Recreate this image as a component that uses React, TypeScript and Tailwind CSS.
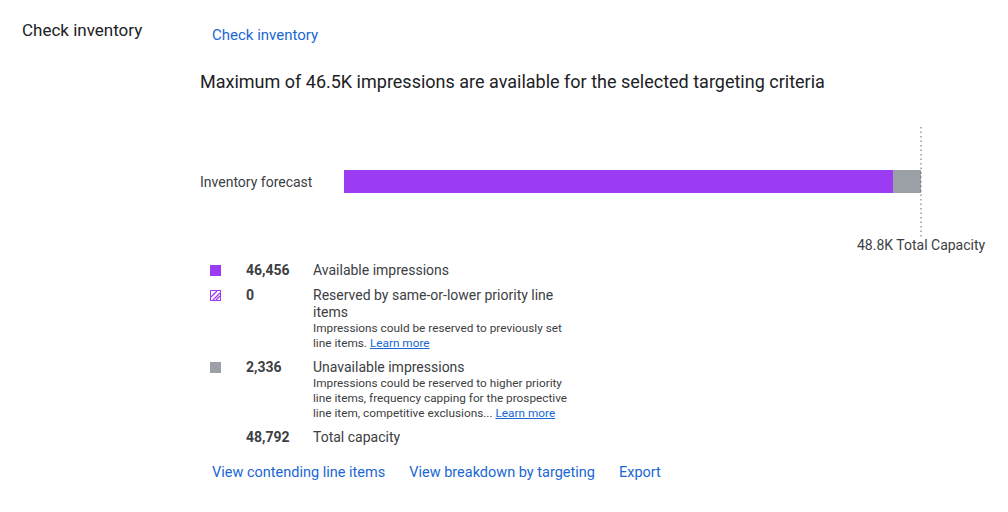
const purple = "#9b3cf3";
const gray = "#9aa0a6";

const HatchIcon = () => (
  <svg width="11" height="11" viewBox="0 0 11 11" className="block">
    <rect x="0.5" y="0.5" width="10" height="10" fill="white" stroke={purple} strokeWidth="1" />
    <path d="M1 7 L7 1 M3 10 L10 3 M6 10 L10 6" stroke={purple} strokeWidth="1.3" />
  </svg>
);

interface LegendRowProps {
  icon?: React.ReactNode;
  value: string;
  label: string;
  note?: React.ReactNode;
}

const LegendRow = ({ icon, value, label, note }: LegendRowProps) => {
  return (
    <div className="flex">
      <div className="w-[36px] pt-[3px]">{icon}</div>
      <div className="w-[67px] font-bold text-[14px] leading-[17px] text-[#3c4043]">{value}</div>
      <div className="w-[266px]">
        <div className="text-[14px] leading-[17px] text-[#3c4043]">{label}</div>
        {note && <div className="w-[263px] text-[11.8px] leading-[15px] text-[#3c4043]">{note}</div>}
      </div>
    </div>
  );
};

const LearnMore = () => (
  <a href="#" className="inline-block leading-[14px] text-[#1a67d2] underline">
    Learn more
  </a>
);

export default function App() {
  return (
    <div className="flex bg-white h-[512px] w-[1008px]" style={{ fontFamily: "Roboto, 'Liberation Sans', sans-serif" }}>
      <div className="w-[200px] pl-[22px] pt-[18px]">
        <h3 className="text-[17px] leading-6 text-[#202124]">Check inventory</h3>
      </div>

      <div className="flex-1 pt-[17px]">
        <button className="h-9 px-3 text-[15px] leading-9 text-[#1a67d2]">Check inventory</button>

        <h2 className="mt-[17px] text-[18px] leading-6 text-[#202124]">
          Maximum of 46.5K impressions are available for the selected targeting criteria
        </h2>

        <div className="relative mt-[33px] pt-[43px]">
          <div className="flex items-center h-[23px]">
            <div className="w-[144px] pt-[2px] text-[14px] text-[#3c4043]">Inventory forecast</div>
            <div className="flex w-[577px] h-[23px]">
              <div className="h-full" style={{ width: "549px", background: purple }} />
              <div className="h-full flex-1" style={{ background: gray }} />
            </div>
          </div>
          <svg className="absolute left-[720px] top-0" width="2" height="110">
            <line x1="1" y1="0" x2="1" y2="110" stroke="#5f6368" strokeWidth="1" strokeDasharray="1.5 3" />
          </svg>
          <div className="mt-[42px] ml-[657px] text-[14px] leading-5 text-[#3c4043] whitespace-nowrap">
            48.8K Total Capacity
          </div>
        </div>

        <div className="mt-[7px] pl-[10px] flex flex-col gap-[8px]">
          <LegendRow
            icon={<div className="w-[11px] h-[11px]" style={{ background: purple }} />}
            value="46,456"
            label="Available impressions"
          />
          <LegendRow
            icon={<HatchIcon />}
            value="0"
            label="Reserved by same-or-lower priority line items"
            note={
              <>
                Impressions could be reserved to previously set line items. <LearnMore />
              </>
            }
          />
          <LegendRow
            icon={<div className="w-[11px] h-[11px]" style={{ background: gray }} />}
            value="2,336"
            label="Unavailable impressions"
            note={
              <>
                Impressions could be reserved to higher priority line items, frequency capping for the prospective
                line item, competitive exclusions... <LearnMore />
              </>
            }
          />
          <LegendRow value="48,792" label="Total capacity" />
        </div>

        <div className="mt-[9px] flex">
          <button className="h-9 px-3 text-[14.5px] text-[#1a67d2]">View contending line items</button>
          <button className="h-9 px-3 text-[14.5px] text-[#1a67d2]">View breakdown by targeting</button>
          <button className="h-9 px-3 text-[14.5px] text-[#1a67d2]">Export</button>
        </div>
      </div>
    </div>
  );
}
